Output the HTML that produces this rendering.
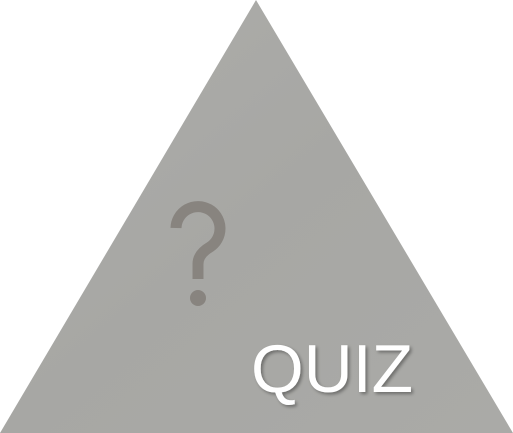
<!DOCTYPE html>
<html><head><style>
html,body{margin:0;padding:0;background:#fff;width:513px;height:433px;overflow:hidden}
</style></head><body>
<svg width="513" height="433" viewBox="0 0 513 433" xmlns="http://www.w3.org/2000/svg" style="display:block">
<defs>
<linearGradient id="g" x1="0" y1="0" x2="1" y2="1">
<stop offset="0" stop-color="#adadaa"/>
<stop offset="0.5" stop-color="#a7a7a4"/>
<stop offset="1" stop-color="#aaaaa7"/>
</linearGradient>
<filter id="s" x="-10%" y="-10%" width="130%" height="130%"><feDropShadow dx="2" dy="2" stdDeviation="1.5" flood-color="#000" flood-opacity="0.35"/></filter>
</defs>
<polygon points="256,0 513,433 0,433" fill="url(#g)"/>
<path d="M176 228 A22 22 0 1 1 210 247 Q198 254 198 264 L198 279" fill="none" stroke="#88847f" stroke-width="11" stroke-linecap="butt"/>
<circle cx="198" cy="298" r="8" fill="#88847f"/>
<text x="251" y="392" font-family="Liberation Sans, sans-serif" font-size="68" fill="#fff" filter="url(#s)" textLength="162" lengthAdjust="spacingAndGlyphs">QUIZ</text>
</svg>
</body></html>
